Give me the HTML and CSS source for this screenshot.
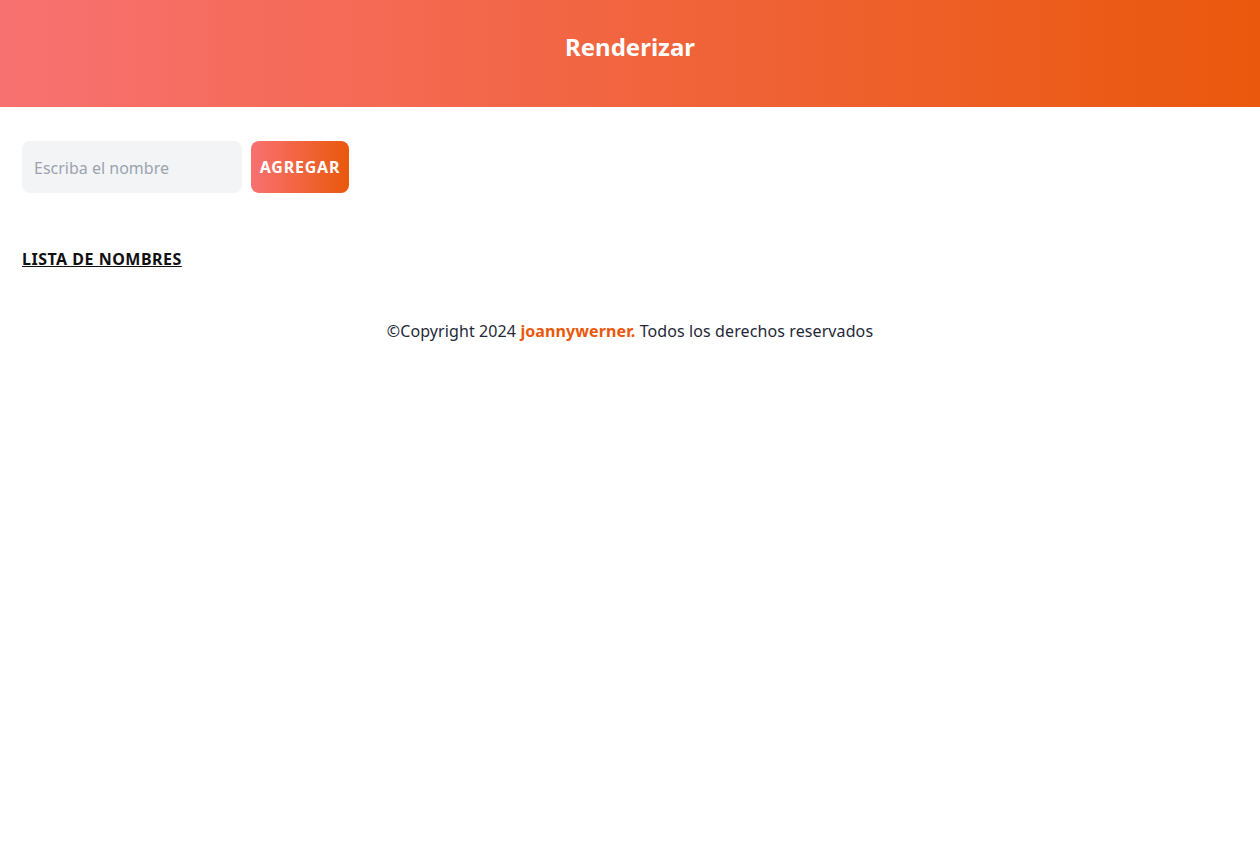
FILE: index.html
```html
<!DOCTYPE html>
<html lang="es">
<head>
<meta charset="utf-8">
<title>Renderizar</title>
<link rel="stylesheet" href="styles.css">
</head>
<body>
<header class="hero">
  <h1 class="hero-title">Renderizar</h1>
</header>
<main class="content">
  <form class="add-form">
    <input class="name-input" type="text" placeholder="Escriba el nombre">
    <button class="add-btn" type="button">AGREGAR</button>
  </form>
  <h2 class="list-title">LISTA DE NOMBRES</h2>
</main>
<footer class="footer">
  <p>©Copyright 2024 <span class="brand">joannywerner.</span> Todos los derechos reservados</p>
</footer>
</body>
</html>
```

FILE: styles.css
```css
* { box-sizing: border-box; }
body {
  margin: 0;
  font-family: "Noto Sans", "Open Sans", sans-serif;
  color: #1f2937;
  background: #fff;
}
.hero {
  height: 107px;
  display: flex;
  align-items: center;
  justify-content: center;
  background: linear-gradient(to right, #f87171, #ea580c);
}
.hero-title {
  margin: 0 0 14px;
  color: #fff;
  font-size: 24px;
  font-weight: 700;
}
.content {
  padding: 34px 22px 0;
}
.add-form {
  display: flex;
  gap: 9px;
}
.name-input {
  width: 220px;
  height: 52px;
  border: none;
  border-radius: 8px;
  background: #f3f4f6;
  padding: 2px 12px 0;
  font-family: inherit;
  font-size: 16px;
  color: #1f2937;
  outline: none;
}
.name-input::placeholder { color: #9ca3af; }
.add-btn {
  width: 98px;
  height: 52px;
  border: none;
  border-radius: 8px;
  background: linear-gradient(to right, #f87171, #ea580c);
  color: #fff;
  font-family: inherit;
  font-size: 16px;
  font-weight: 700;
  letter-spacing: 0.8px;
  padding: 0;
}
.list-title {
  margin: 55px 0 0;
  font-size: 16px;
  font-weight: 700;
  letter-spacing: 0.5px;
  text-decoration: underline;
  color: #111;
}
.footer {
  text-align: center;
  margin-top: 50px;
}
.footer p { margin: 0; font-size: 16px; letter-spacing: 0.1px; }
.brand { color: #ea580c; font-weight: 700; }
```
